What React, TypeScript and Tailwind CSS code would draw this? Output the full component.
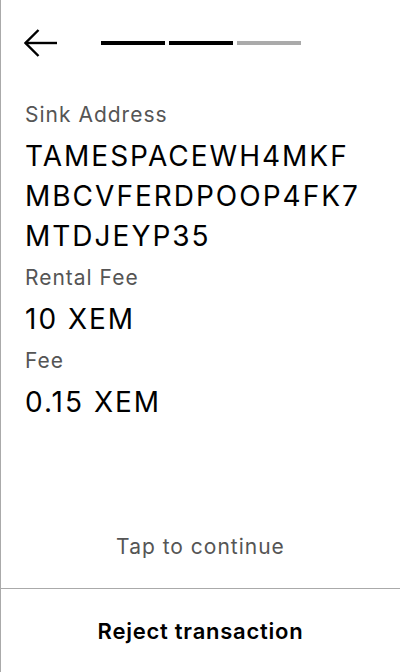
import React from 'react';

const fields = [
  { label: 'Sink Address', lines: ['TAMESPACEWH4MKF', 'MBCVFERDPOOP4FK7', 'MTDJEYP35'] },
  { label: 'Rental Fee', lines: ['10 XEM'] },
  { label: 'Fee', lines: ['0.15 XEM'] },
];

const BackArrow = () => (
  <svg width="34" height="28" viewBox="0 0 34 28" fill="none" stroke="#000" strokeWidth="2.4" strokeLinecap="butt">
    <path d="M1.5 14H33" />
    <path d="M14.5 1L1.5 14L14.5 27" />
  </svg>
);

const App: React.FC = () => {
  const step = 2;

  return (
    <div className="h-[672px] w-full bg-white border-l border-[#aaaaaa] flex flex-col font-['Inter','Noto_Sans',sans-serif]">
      <div className="flex items-center pt-[29px] pl-[23px]">
        <button className="w-[34px] h-[28px] flex items-center">
          <BackArrow />
        </button>
        <div className="flex gap-1 ml-[43px]">
          {[0, 1, 2].map(i => (
            <div key={i} className={`w-16 h-1 ${i < step ? 'bg-black' : 'bg-[#aaaaaa]'}`} />
          ))}
        </div>
      </div>

      <div className="px-6 mt-[44px] flex-1">
        {fields.map((f, idx) => (
          <div key={f.label} className={idx === 0 ? '' : 'mt-[8px]'}>
            <p className="text-[21px] leading-[28px] tracking-[1px] text-[#555555]">{f.label}</p>
            <p className="mt-[7px] text-[28px] leading-[40px] tracking-[2px] text-black">
              {f.lines.map(l => (
                <span key={l} className="block">{l}</span>
              ))}
            </p>
          </div>
        ))}
      </div>

      <p className="text-center text-[21px] leading-[28px] tracking-[1px] text-[#555555] pb-[27px]">Tap to continue</p>
      <div className="border-t border-[#aaaaaa] h-[84px] flex items-center justify-center">
        <button className="text-[22px] leading-[28px] tracking-[0.75px] font-semibold text-black">Reject transaction</button>
      </div>
    </div>
  );
};

export default App;
